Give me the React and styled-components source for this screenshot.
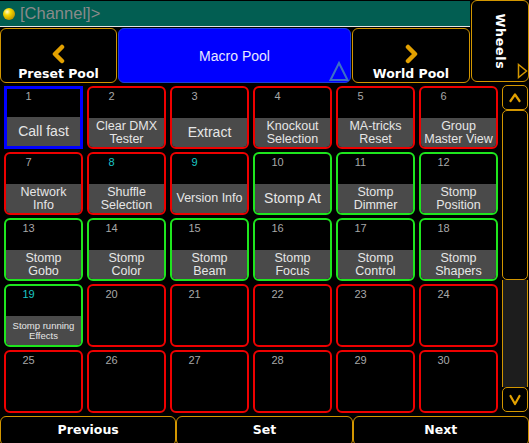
import React from "react";
import styled, { createGlobalStyle, css } from "styled-components";

const ORANGE = "#d29600";
const CHEVRON = "#e3a100";

const Global = createGlobalStyle`
  html, body { margin: 0; padding: 0; background: #000; }
  body {
    width: 529px;
    height: 443px;
    overflow: hidden;
    font-family: "Liberation Sans", Arial, sans-serif;
  }
  * { box-sizing: border-box; }
`;

const Screen = styled.div`
  width: 529px;
  height: 443px;
  background: #000;
  display: flex;
  flex-direction: column;
  overflow: hidden;
`;

/* ---------- top: command line, pool navigation, wheels ---------- */

const TopArea = styled.div`
  display: flex;
  height: 83px;
  flex: none;
`;

const TopLeft = styled.div`
  width: 470px;
  display: flex;
  flex-direction: column;
`;

const CommandLine = styled.div`
  height: 26px;
  margin-top: 1px;
  background: #025e52;
  border-bottom: 1px solid #e6e6e6;
  display: flex;
  align-items: center;
  gap: 5px;
  padding-left: 3px;
  font-size: 16.5px;
  color: #8a8a8a;
`;

const Lamp = styled.span`
  width: 12px;
  height: 12px;
  border-radius: 50%;
  background: radial-gradient(
    circle at 35% 32%,
    #fffbd0 0%,
    #f5d800 30%,
    #c09a00 72%,
    #6a5000 100%
  );
`;

const PoolNav = styled.div`
  display: flex;
  height: 55px;
  margin-top: 1px;
  gap: 1px;
`;

const NavButton = styled.div`
  width: ${(p) => p.$w}px;
  border: 1px solid ${ORANGE};
  border-radius: 6px;
  background: #000;
  display: flex;
  flex-direction: column;
  align-items: center;
  justify-content: flex-end;
  gap: 2px;
  padding-bottom: 1px;
`;

const BoldText = styled.span`
  font-family: "DejaVu Sans", Verdana, sans-serif;
  font-weight: bold;
  font-size: 12.5px;
  line-height: 15px;
  color: #fff;
  white-space: nowrap;
`;

const CurrentPool = styled.div`
  position: relative;
  flex: 1;
  background: #0000ff;
  border: 1px solid #1f3fd8;
  border-radius: 6px;
  display: flex;
  align-items: center;
  justify-content: center;
  font-size: 14px;
  color: #e8e8ff;
`;

const CornerMark = styled.svg`
  position: absolute;
  right: 0;
  bottom: ${(p) => p.$bottom || 0}px;
`;

const WheelsButton = styled.div`
  position: relative;
  width: 58px;
  height: 82px;
  margin-left: 1px;
  border: 1px solid ${ORANGE};
  border-radius: 6px;
  background: #000;
  display: flex;
  align-items: center;
  justify-content: center;
`;

const RotatedText = styled(BoldText)`
  display: block;
  transform: rotate(90deg);
  letter-spacing: 0.8px;
`;

/* ---------- macro grid ---------- */

const MainRow = styled.div`
  display: flex;
  align-items: flex-start;
  height: 332px;
  flex: none;
  padding: 2px 0 0 4px;
`;

const PoolGrid = styled.div`
  display: grid;
  grid-template-columns: repeat(6, 79px);
  grid-template-rows: repeat(5, 63px);
  column-gap: 4px;
  row-gap: 3px;
  margin-top: 1px;
`;

const TONES = {
  red: "#ee0000",
  green: "#1ee61e",
};

const Cell = styled.div`
  border: 2px solid ${(p) => TONES[p.$tone]};
  border-radius: 6px;
  background: #000;
  overflow: hidden;
  display: flex;
  flex-direction: column;
  ${(p) =>
    p.$selected &&
    css`
      border: 3px solid #0000ff;
      border-radius: 0;
    `}
`;

const Num = styled.div`
  width: 17px;
  margin-left: ${(p) => (p.$selected ? 13 : 14)}px;
  padding-top: ${(p) => (p.$selected ? 1 : 2)}px;
  text-align: center;
  font-size: 11px;
  line-height: 13px;
  color: ${(p) => (p.$cyan ? "#1cc6c6" : "#a8a8a8")};
`;

const Label = styled.div`
  margin-top: auto;
  height: 29px;
  background: #4a4a4a;
  display: flex;
  flex-direction: column;
  align-items: center;
  justify-content: center;
  color: #e6e6e6;
  font-size: ${(p) => p.$size}px;
  line-height: ${(p) => p.$lh}px;
  font-weight: ${(p) => (p.$bold ? "bold" : "normal")};
  white-space: nowrap;
`;

/* ---------- scroll bar ---------- */

const ScrollBar = styled.div`
  width: 26px;
  height: 327px;
  margin-left: 4px;
  display: flex;
  flex-direction: column;
`;

const ScrollButton = styled.div`
  height: 25px;
  flex: none;
  border: 1px solid ${ORANGE};
  border-radius: 5px;
  background: #000;
  display: flex;
  align-items: center;
  justify-content: center;
`;

const Thumb = styled.div`
  height: 170px;
  flex: none;
  border: 1px solid ${ORANGE};
  border-radius: 5px;
  background: #000;
`;

const Track = styled.div`
  flex: 1;
  background: #1d1d1d;
  border-left: 1px solid ${ORANGE};
  border-right: 1px solid ${ORANGE};
`;

/* ---------- bottom bar ---------- */

const BottomBar = styled.div`
  display: flex;
  padding-top: 1px;
`;

const BarButton = styled.div`
  flex: 1;
  height: 30px;
  border: 1px solid ${ORANGE};
  border-radius: 6px;
  background: #000;
  display: flex;
  justify-content: center;
  padding-top: 5px;
`;

/* ---------- drawings ---------- */

const Chevron = ({ dir }) => (
  <svg width="16" height="20" viewBox="0 0 16 20">
    <polyline
      points={dir === "left" ? "11,3 4,10 11,17" : "5,3 12,10 5,17"}
      fill="none"
      stroke={CHEVRON}
      strokeWidth="4.5"
      strokeLinecap="round"
      strokeLinejoin="round"
    />
  </svg>
);

const ScrollArrow = ({ dir }) => (
  <svg width="12" height="12" viewBox="0 0 12 12">
    <polyline
      points={dir === "up" ? "1.5,9 6,2.5 10.5,9" : "1.5,2 6,10 10.5,2"}
      fill="none"
      stroke={CHEVRON}
      strokeWidth="2.2"
      strokeLinecap="round"
      strokeLinejoin="round"
    />
  </svg>
);

const macros = [
  { n: 1, lines: ["Call fast"], size: 14, selected: true },
  { n: 2, lines: ["Clear DMX", "Tester"] },
  { n: 3, lines: ["Extract"], size: 14 },
  { n: 4, lines: ["Knockout", "Selection"] },
  { n: 5, lines: ["MA-tricks", "Reset"] },
  { n: 6, lines: ["Group", "Master View"] },
  { n: 7, lines: ["Network", "Info"] },
  { n: 8, lines: ["Shuffle", "Selection"], cyan: true },
  { n: 9, lines: ["Version Info"], cyan: true },
  { n: 10, lines: ["Stomp At"], size: 14, tone: "green" },
  { n: 11, lines: ["Stomp", "Dimmer"], tone: "green" },
  { n: 12, lines: ["Stomp", "Position"], tone: "green" },
  { n: 13, lines: ["Stomp", "Gobo"], tone: "green" },
  { n: 14, lines: ["Stomp", "Color"], tone: "green" },
  { n: 15, lines: ["Stomp", "Beam"], tone: "green" },
  { n: 16, lines: ["Stomp", "Focus"], tone: "green" },
  { n: 17, lines: ["Stomp", "Control"], tone: "green" },
  { n: 18, lines: ["Stomp", "Shapers"], tone: "green" },
  {
    n: 19,
    lines: ["Stomp running", "Effects"],
    tone: "green",
    cyan: true,
    size: 9.5,
    lh: 10,
  },
];

const cells = Array.from({ length: 30 }, (_, i) => {
  const m = macros[i];
  return m ? { tone: "red", ...m } : { n: i + 1, tone: "red" };
});

export default function App() {
  return (
    <Screen>
      <Global />
      <TopArea>
        <TopLeft>
          <CommandLine>
            <Lamp />
            <span>[Channel]&gt;</span>
          </CommandLine>
          <PoolNav>
            <NavButton $w={117}>
              <Chevron dir="left" />
              <BoldText>Preset Pool</BoldText>
            </NavButton>
            <CurrentPool>
              Macro Pool
              <CornerMark width="22" height="22" viewBox="0 0 22 22">
                <polygon
                  points="11,3 19.5,20 2.5,20"
                  fill="none"
                  stroke="#3d70c6"
                  strokeWidth="2"
                />
              </CornerMark>
            </CurrentPool>
            <NavButton $w={118}>
              <Chevron dir="right" />
              <BoldText>World Pool</BoldText>
            </NavButton>
          </PoolNav>
        </TopLeft>
        <WheelsButton>
          <RotatedText>Wheels</RotatedText>
          <CornerMark width="11" height="16" viewBox="0 0 11 16" $bottom={2}>
            <polygon
              points="1.5,1.5 9.5,8 1.5,14.5"
              fill="none"
              stroke={ORANGE}
              strokeWidth="1.5"
            />
          </CornerMark>
        </WheelsButton>
      </TopArea>

      <MainRow>
        <PoolGrid>
          {cells.map((c) => (
            <Cell key={c.n} $tone={c.tone} $selected={c.selected}>
              <Num $cyan={c.cyan} $selected={c.selected}>
                {c.n}
              </Num>
              {c.lines && (
                <Label
                  $size={c.size || 12.5}
                  $lh={c.lh || 13}
                  $bold={c.bold}
                >
                  {c.lines.map((l) => (
                    <span key={l}>{l}</span>
                  ))}
                </Label>
              )}
            </Cell>
          ))}
        </PoolGrid>
        <ScrollBar>
          <ScrollButton>
            <ScrollArrow dir="up" />
          </ScrollButton>
          <Thumb />
          <Track />
          <ScrollButton>
            <ScrollArrow dir="down" />
          </ScrollButton>
        </ScrollBar>
      </MainRow>

      <BottomBar>
        <BarButton>
          <BoldText>Previous</BoldText>
        </BarButton>
        <BarButton>
          <BoldText>Set</BoldText>
        </BarButton>
        <BarButton>
          <BoldText>Next</BoldText>
        </BarButton>
      </BottomBar>
    </Screen>
  );
}
